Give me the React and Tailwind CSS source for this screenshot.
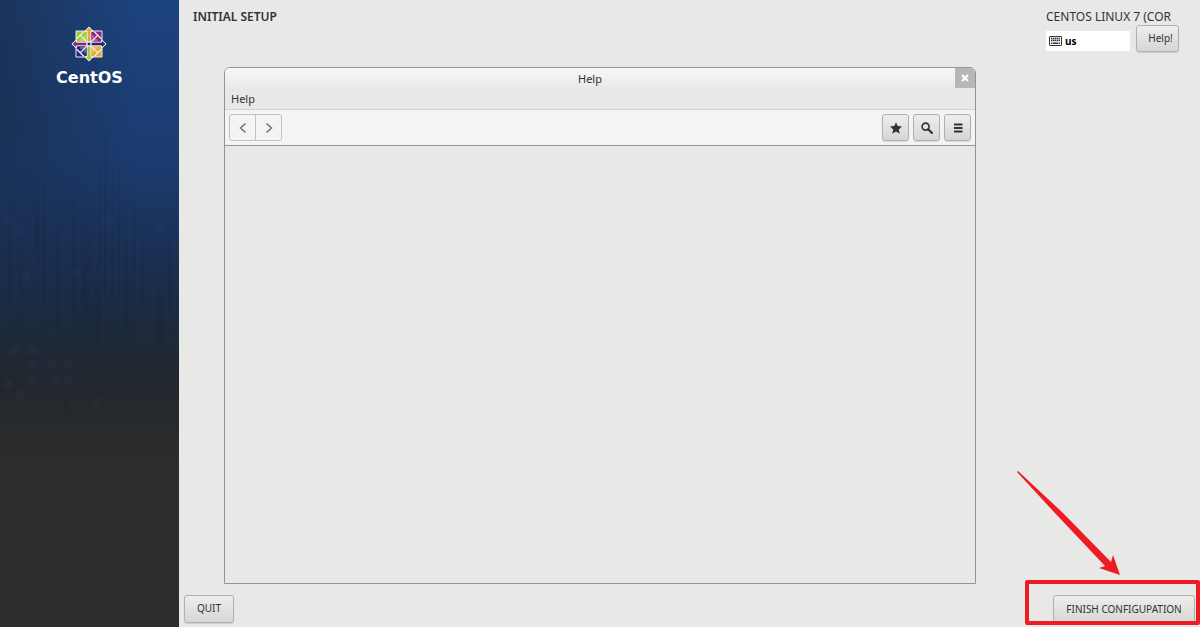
const raised = "border border-[#b0b0ae] rounded-[3px] bg-linear-to-b from-[#eeeeed] to-[#d6d6d4] text-[#2e3436] shadow-[0_1px_1px_rgba(0,0,0,0.12)]";

// faint circuit-like streaks: [x, y, width, height]
const streaks = [
    [8, 190, 4, 150], [18, 236, 7, 96], [34, 170, 6, 130], [43, 140, 3, 240],
    [56, 210, 4, 160], [64, 390, 6, 30], [72, 170, 5, 200], [82, 200, 8, 180], [92, 260, 9, 120],
    [98, 100, 2, 260], [104, 110, 3, 280], [111, 130, 2, 270], [117, 120, 3, 260],
    [124, 190, 4, 190], [133, 160, 3, 200], [141, 210, 4, 130], [157, 240, 5, 160], [168, 220, 4, 120],
];
const nodes = [
    [4, 214], [14, 226], [20, 272], [10, 346], [28, 346], [28, 360], [28, 376],
    [48, 360], [64, 360], [52, 376], [64, 376], [70, 268], [106, 216], [156, 222],
    [4, 380], [16, 390], [92, 398],
];

const CentLogo = () => (
    <svg viewBox="-18 -18 36 36" className="w-9 h-9" aria-hidden="true">
        <path d="M0-17.5 17.5 0 0 17.5-17.5 0Z" fill="#dfe5ee" />
        <g stroke="#e8ecf3" strokeWidth="1">
            <path d="M-13-13H0V0h-13Z" fill="#9ccd2a" />
            <path d="M0-13h13V0H0Z" fill="#932279" />
            <path d="M-13 0H0v13h-13Z" fill="#262577" />
            <path d="M0 0h13v13H0Z" fill="#efa724" />
        </g>
        <g fill="none" stroke="#e8ecf3" strokeWidth="1.3">
            <path d="M-12.5-5-5-12.5M5-12.5 12.5-5M12.5 5 5 12.5M-5 12.5-12.5 5" />
            <path d="M-9-9 9 9M9-9-9 9" />
            <path d="M-4-9v5h-5M4-9v5h5M-4 9V4h-5M4 9V4h5" strokeWidth="0.6" />
        </g>
        <g stroke="#e8ecf3" strokeWidth="1">
            <path d="M0-17 4-12.5H1.8V-2h-3.6v-10.5H-4Z" fill="#efa724" />
            <path d="M17 0 12.5 4V1.8H2v-3.6h10.5V-4Z" fill="#262577" />
            <path d="M0 17-4 12.5h2.2V2h3.6v10.5H4Z" fill="#9ccd2a" />
            <path d="M-17 0-12.5-4v2.2H-2v3.6h-10.5V4Z" fill="#932279" />
            <path d="M-1.8-1.8h3.6v3.6h-3.6Z" fill="#262577" />
        </g>
    </svg>
);

const KeyboardIcon = () => (
    <svg viewBox="0 0 13 10" className="w-[13px] h-[10px]" aria-hidden="true">
        <rect x="0.5" y="0.5" width="12" height="9" rx="0.5" fill="#fff" stroke="#2e3436" />
        <path d="M2 2.5h9M2 4.5h9" stroke="#2e3436" strokeWidth="1.4" strokeDasharray="1.4 0.5" />
        <path d="M2 7.2h1.4M4 7.2h5M9.6 7.2H11" stroke="#2e3436" strokeWidth="1.4" />
    </svg>
);

const StarIcon = () => (
    <svg viewBox="0 0 12 12" className="w-3 h-3" fill="currentColor" aria-hidden="true">
        <path d="M6 .2 7.7 4.1 12 4.5 8.8 7.4 9.7 11.7 6 9.5 2.3 11.7 3.2 7.4 0 4.5 4.3 4.1Z" />
    </svg>
);

const SearchIcon = () => (
    <svg viewBox="0 0 12 12" className="w-3 h-3" fill="none" stroke="currentColor" aria-hidden="true">
        <circle cx="4.6" cy="4.6" r="3.5" strokeWidth="1.6" />
        <path d="M7.2 7.2 11 11" strokeWidth="2.2" strokeLinecap="round" />
    </svg>
);

const MenuIcon = () => (
    <svg viewBox="0 0 12 12" className="w-3 h-3" stroke="currentColor" strokeWidth="1.8" aria-hidden="true">
        <path d="M2 2.5h8.5M2 6h8.5M2 9.5h8.5" />
    </svg>
);

const Chevron = ({ d }) => (
    <svg viewBox="0 0 8 10" className="w-2 h-2.5" fill="none" stroke="currentColor" strokeWidth="1.6" aria-hidden="true">
        <path d={d} />
    </svg>
);

const Sidebar = () => (
    <aside className="relative w-[179px] shrink-0 flex flex-col items-center pt-[26px] bg-[linear-gradient(#1d437e_0%,#1b3c70_25%,#1b2f51_42%,#1d2a3d_52%,#23272d_62%,#2d2d2d_74%)]">
        <div className="absolute inset-0 bg-[linear-gradient(to_right,rgba(26,42,68,0.6),transparent_75%)] mask-[linear-gradient(black_20%,transparent_60%)]" />
        <svg className="absolute inset-0 w-full h-full" aria-hidden="true">
            <defs>
                <linearGradient id="streak" x1="0" y1="0" x2="0" y2="1">
                    <stop offset="0" stopColor="#0c1a30" stopOpacity="0" />
                    <stop offset="0.5" stopColor="#0c1a30" stopOpacity="0.16" />
                    <stop offset="1" stopColor="#0c1a30" stopOpacity="0" />
                </linearGradient>
            </defs>
            {streaks.map(([x, y, w, h]) => <rect key={x} x={x} y={y} width={w} height={h} fill="url(#streak)" />)}
            <g fill="#4a5f85" opacity="0.07">
                {nodes.map(([x, y]) => <rect key={`${x}-${y}`} x={x} y={y} width="9" height="9" rx="3" />)}
            </g>
        </svg>
        <div className="relative flex flex-col items-center">
            <CentLogo />
            <span className="mt-1 font-['DejaVu_Sans',sans-serif] font-bold text-base leading-6 text-white">CentOS</span>
        </div>
    </aside>
);

const Header = () => (
    <header className="flex justify-between pl-3.5 pr-[21px] pt-2 h-[67px]">
        <h1 className="text-xs leading-[18px] font-semibold">INITIAL SETUP</h1>
        <div className="w-[133px]">
            <div className="text-xs leading-[18px] whitespace-nowrap">CENTOS LINUX 7 (COR</div>
            <div className="flex items-start gap-1.5 -mt-px">
                <div className="mt-1.5 flex-1 h-5 pl-[3px] flex items-center gap-[3px] bg-white text-[10px] font-bold text-black">
                    <KeyboardIcon />
                    us
                </div>
                <button className={`${raised} w-[43px] h-[27px] pl-1.5 text-[10px]`}>Help!</button>
            </div>
        </div>
    </header>
);

const HelpWindow = () => (
    <section className="flex-1 flex flex-col ml-[45px] mr-[224px] border border-[#929595] rounded-t-md overflow-hidden">
        <div className="flex h-[21px] bg-linear-to-b from-[#f8f8f8] to-[#e8e8e7]">
            <h2 className="flex-1 text-center text-[11px] leading-[21px]">Help</h2>
            <button aria-label="Close" className="w-5 h-5 flex items-center justify-center bg-[#b5b8b7] text-white">
                <svg viewBox="0 0 8 8" className="w-2 h-2" stroke="currentColor" strokeWidth="2.2" aria-hidden="true">
                    <path d="M1 1l6 6M7 1 1 7" />
                </svg>
            </button>
        </div>
        <nav className="h-[21px] pl-1.5 border-b border-[#d4d4d2]">
            <button className="text-[11px] leading-5 block">Help</button>
        </nav>
        <div className="flex items-center justify-between h-9 px-1 bg-[#f4f4f4] border-b border-[#929595]">
            <div className="flex border border-[#c0c2c0] rounded-[3px] text-[#777b7b]">
                <button aria-label="Back" className="w-[26px] h-[25px] flex items-center justify-center border-r border-[#c0c2c0]">
                    <Chevron d="M6.5 .7 1.5 5l5 4.3" />
                </button>
                <button aria-label="Forward" className="w-[25px] h-[25px] flex items-center justify-center">
                    <Chevron d="M1.5.7l5 4.3-5 4.3" />
                </button>
            </div>
            <div className="flex gap-1">
                <button aria-label="Bookmarks" className={`${raised} w-[27px] h-[27px] flex items-center justify-center`}>
                    <StarIcon />
                </button>
                <button aria-label="Search" className={`${raised} w-[27px] h-[27px] flex items-center justify-center`}>
                    <SearchIcon />
                </button>
                <button aria-label="Menu" className={`${raised} w-[27px] h-[27px] flex items-center justify-center`}>
                    <MenuIcon />
                </button>
            </div>
        </div>
        <div className="flex-1" />
    </section>
);

const Footer = () => (
    <footer className="flex justify-between px-[5px] pt-[11px] pb-1">
        <button className={`${raised} w-[50px] h-7 text-[10px]`}>QUIT</button>
        <div className="relative">
            <button className={`${raised} w-[142px] h-7 text-[10px]`}>FINISH CONFIGUPATION</button>
            {/* highlight box and pointer */}
            <div className="absolute -left-7 -right-[5px] -top-[15px] h-[45px] border-4 border-[#ed1c24] rounded-xs pointer-events-none" />
            <svg viewBox="0 0 104 106" className="absolute -left-9 bottom-[47px] w-[104px] h-[106px] pointer-events-none" fill="#ed1c24" aria-hidden="true">
                <path d="M0 2 1 1 46 43 94 92 96 85 103 105 82 98 88 96 37 42Z" />
            </svg>
        </div>
    </footer>
);

export default function App() {
    return (
        <div className="min-h-screen flex bg-[#e8e8e7] text-[#2e3436] font-['Noto_Sans',sans-serif] overflow-hidden">
            <Sidebar />
            <main className="flex-1 flex flex-col min-w-0">
                <Header />
                <HelpWindow />
                <Footer />
            </main>
        </div>
    );
}
